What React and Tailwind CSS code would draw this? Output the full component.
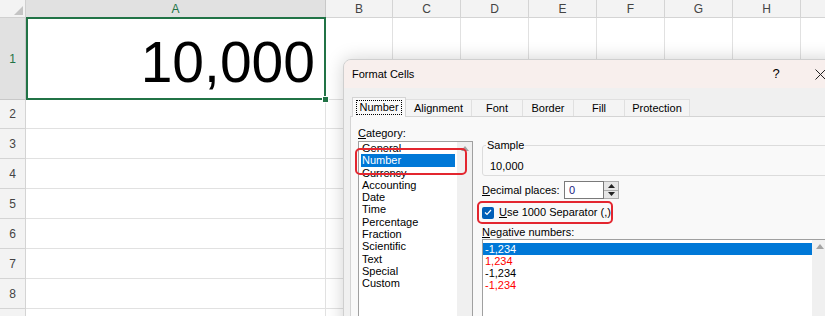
import React from 'react'

const cols = [
  { label: 'B', w: 'w-[67px]' },
  { label: 'C', w: 'w-[68px]' },
  { label: 'D', w: 'w-[68px]' },
  { label: 'E', w: 'w-[68px]' },
  { label: 'F', w: 'w-[68px]' },
  { label: 'G', w: 'w-[68px]' },
  { label: 'H', w: 'w-[68px]' },
  { label: '', w: 'w-[40px]' },
]

const rows = [
  { n: '2', h: 'h-[29px]' },
  { n: '3', h: 'h-[30px]' },
  { n: '4', h: 'h-[30px]' },
  { n: '5', h: 'h-[30px]' },
  { n: '6', h: 'h-[30px]' },
  { n: '7', h: 'h-[30px]' },
  { n: '8', h: 'h-[30px]' },
  { n: '', h: 'h-[30px]' },
]

const categories = [
  'General', 'Number', 'Currency', 'Accounting', 'Date', 'Time', 'Percentage',
  'Fraction', 'Scientific', 'Text', 'Special', 'Custom',
]

const negatives = [
  { t: '-1,234', c: 'text-white bg-[#0078d7]' },
  { t: '1,234', c: 'text-[#ff0000]' },
  { t: '-1,234', c: 'text-black' },
  { t: '-1,234', c: 'text-[#ff0000]' },
]

const tabs = [
  { t: 'Alignment', w: 'w-[66px]' },
  { t: 'Font', w: 'w-[51px]' },
  { t: 'Border', w: 'w-[51px]' },
  { t: 'Fill', w: 'w-[51px]' },
  { t: 'Protection', w: 'w-[65px]' },
]

const UpArrow = () => (
  <svg width="8" height="5" viewBox="0 0 8 5">
    <path d="M0 5 L4 0 L8 5 Z" fill="#a3a3a3" />
  </svg>
)

const Scrollbar = () => (
  <div className="w-[15px] shrink-0 bg-[#f0f0f0] flex justify-center pt-[4px]">
    <div>
      <UpArrow />
    </div>
  </div>
)

const Sheet = () => (
  <div className="flex flex-col w-[900px]">
    {/* column headers */}
    <div className="flex h-[18px]">
      <div className="w-[26px] shrink-0 h-full bg-[#f3f3f3] border-r border-b border-[#d0d0d0] flex items-end justify-end p-[2px]">
        <svg width="9" height="9" viewBox="0 0 9 9">
          <path d="M9 0 L9 9 L0 9 Z" fill="#c4c4c4" />
        </svg>
      </div>
      <div className="w-[300px] shrink-0 h-full bg-[#e1e1e1] border-r border-b border-[#c8c8c8] flex items-center justify-center text-[12px] text-[#217346]">
        A
      </div>
      {cols.map((c, i) => (
        <div
          key={i}
          className={`${c.w} shrink-0 h-full bg-[#f3f3f3] border-r border-b border-[#d4d4d4] flex items-center justify-center text-[12px] text-[#444]`}
        >
          {c.label}
        </div>
      ))}
    </div>

    {/* row 1 */}
    <div className="flex h-[82px]">
      <div className="w-[26px] shrink-0 h-full bg-[#e1e1e1] border-r border-b border-[#c8c8c8] flex items-center justify-center text-[12px] text-[#217346]">
        1
      </div>
      <div className="relative w-[300px] shrink-0 h-full border-r border-b border-[#e1e1e1] flex items-end justify-end pr-[10px] pb-[8px]">
        <span className="text-[57px] leading-none text-black">10,000</span>
        <div className="absolute left-0 -top-[1px] -right-[1px] -bottom-[1px] border-2 border-[#217346]" />
        <div className="absolute -right-[4px] -bottom-[4px] w-[7px] h-[7px] bg-[#217346] border border-white" />
      </div>
      {cols.map((c, i) => (
        <div key={i} className={`${c.w} shrink-0 h-full border-r border-b border-[#e1e1e1]`} />
      ))}
    </div>

    {rows.map((r, ri) => (
      <div key={ri} className={`flex ${r.h}`}>
        <div className="w-[26px] shrink-0 h-full bg-[#f3f3f3] border-r border-b border-[#d4d4d4] flex items-center justify-center text-[12px] text-[#444]">
          {r.n}
        </div>
        <div className="w-[300px] shrink-0 h-full border-r border-b border-[#e1e1e1]" />
        {cols.map((c, i) => (
          <div key={i} className={`${c.w} shrink-0 h-full border-r border-b border-[#e1e1e1]`} />
        ))}
      </div>
    ))}
  </div>
)

const Dialog = () => (
  <div className="absolute left-[343px] top-[59px] w-[500px] h-[290px] rounded-t-[8px] overflow-hidden bg-[#f0f0f0] border border-[#cfcfcf] shadow-[0_0_18px_rgba(0,0,0,0.18)] flex flex-col text-[11px] text-black">
    {/* title bar */}
    <div className="h-[28px] bg-[#f8efed] flex items-center pl-[8px] shrink-0">
      <span>Format Cells</span>
      <div className="ml-auto flex h-full">
        <div className="w-[44px] flex items-center justify-center text-[13px]">?</div>
        <div className="w-[44px] flex items-center justify-center">
          <svg width="11" height="11" viewBox="0 0 11 11">
            <path d="M0.5 0.5 L10.5 10.5 M10.5 0.5 L0.5 10.5" stroke="#222" strokeWidth="1" />
          </svg>
        </div>
      </div>
    </div>

    {/* body */}
    <div className="flex-1 flex flex-col px-[6px] pt-[8px]">
      <div className="flex items-end ml-[2px] h-[20px] relative z-10">
        <div className="w-[54px] h-[20px] -mb-px bg-[#f9f9f9] border border-b-0 border-[#d4d4d4] flex items-center justify-center">
          <span className="border border-dotted border-black px-[2px] leading-[13px]">Number</span>
        </div>
        {tabs.map((t) => (
          <div
            key={t.t}
            className={`${t.w} h-[17px] bg-[#f4f4f4] border border-l-0 border-b-0 border-[#e0e0e0] flex items-center justify-center`}
          >
            {t.t}
          </div>
        ))}
      </div>

      <div className="flex-1 bg-[#f9f9f9] border border-[#d4d4d4] pl-[7px] pt-[10px] flex gap-[9px]">
        {/* category column */}
        <div className="w-[115px] shrink-0 flex flex-col">
          <div className="h-[13px] leading-[13px]">
            <span className="underline">C</span>ategory:
          </div>
          <div className="relative mt-[1px] h-[200px] bg-white border border-[#a0a0a0] flex">
            <div className="flex-1 flex flex-col px-[2px]">
              {categories.map((c) => (
                <div
                  key={c}
                  className={`h-[12.3px] leading-[12.3px] pl-[1px] ${
                    c === 'Number' ? 'bg-[#0078d7] text-white' : ''
                  }`}
                >
                  {c}
                </div>
              ))}
            </div>
            <Scrollbar />
            <div className="absolute -left-[4px] top-[6px] w-[112px] h-[27px] border-2 border-[#e3262f] rounded-[5px]" />
          </div>
        </div>

        {/* right column */}
        <div className="w-[346px] shrink-0 flex flex-col">
          <fieldset className="mt-[12px] border border-[#dcdcdc] rounded-[3px] pl-[3px] pb-[2px]">
            <legend className="px-[1px] leading-[13px]">Sample</legend>
            <div className="mt-[8px] ml-[4px] h-[13px] leading-[13px]">10,000</div>
          </fieldset>

          <div className="mt-[5px] flex items-center h-[18px]">
            <div className="w-[82px]">
              <span className="underline">D</span>ecimal places:
            </div>
            <div className="w-[40px] h-[18px] bg-white border border-[#7a7a7a] flex items-center pl-[4px] text-[#1a1a80]">
              0
            </div>
            <div className="w-[15px] h-[18px] flex flex-col">
              <div className="flex-1 bg-[#e6e6e6] border border-l-0 border-[#adadad] flex items-center justify-center">
                <svg width="7" height="4" viewBox="0 0 7 4">
                  <path d="M0 4 L3.5 0 L7 4 Z" fill="#222" />
                </svg>
              </div>
              <div className="flex-1 bg-[#e6e6e6] border border-l-0 border-t-0 border-[#adadad] flex items-center justify-center">
                <svg width="7" height="4" viewBox="0 0 7 4">
                  <path d="M0 0 L3.5 4 L7 0 Z" fill="#222" />
                </svg>
              </div>
            </div>
          </div>

          <div className="relative mt-[7px] h-[13px] flex items-center gap-[5px]">
            <div className="w-[12px] h-[12px] rounded-[2px] bg-[#005fb8] flex items-center justify-center">
              <svg width="8" height="7" viewBox="0 0 8 7">
                <path d="M1 3.5 L3 5.5 L7 1" stroke="white" strokeWidth="1.2" fill="none" />
              </svg>
            </div>
            <span>
              <span className="underline">U</span>se 1000 Separator (,)
            </span>
            <div className="absolute -left-[5px] -top-[5px] w-[136px] h-[23px] border-2 border-[#e3262f] rounded-[5px]" />
          </div>

          <div className="mt-[7px] h-[13px] leading-[13px]">
            <span className="underline">N</span>egative numbers:
          </div>
          <div className="h-[100px] bg-white border border-[#a0a0a0] flex">
            <div className="flex-1 flex flex-col pt-[3px]">
              {negatives.map((n, i) => (
                <div key={i} className={`h-[12px] leading-[12px] pl-[2px] ${n.c}`}>
                  {n.t}
                </div>
              ))}
            </div>
            <Scrollbar />
          </div>
        </div>
      </div>
    </div>
  </div>
)

export default function App() {
  return (
    <div className="relative w-[825px] h-[316px] overflow-hidden bg-white font-['Liberation_Sans',Arial,sans-serif]">
      <Sheet />
      <Dialog />
    </div>
  )
}
